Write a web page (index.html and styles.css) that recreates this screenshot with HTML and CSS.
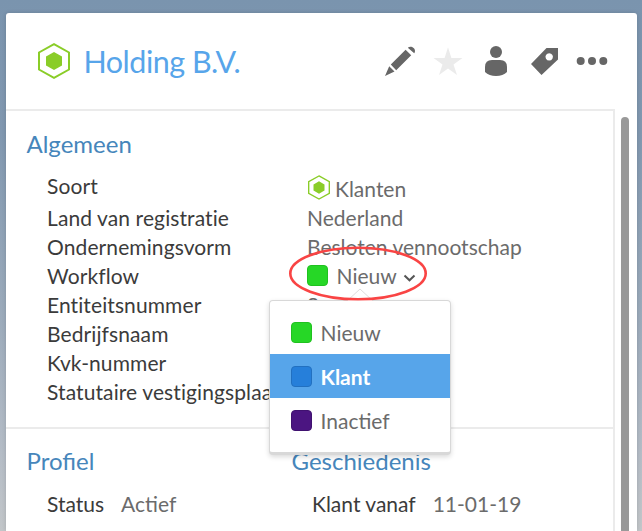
FILE: index.html
```html
<!DOCTYPE html>
<html lang="nl">
<head>
<meta charset="utf-8">
<title>Holding B.V.</title>
<link rel="stylesheet" href="styles.css">
</head>
<body>
<main class="panel">
  <header class="header">
    <svg class="logo" viewBox="0 0 32 36"><path class="hex-line" d="M16 1.2 31 9.5V26.5L16 34.8 1 26.5V9.5Z"/><path class="hex-fill" d="M16 9 24 13.5V22.5L16 27 8 22.5V13.5Z"/></svg>
    <h1 class="title">Holding B.V.</h1>
    <nav class="tools">
      <svg class="tool" viewBox="0 0 32 32"><path d="M1 31 5.2 21.3 10.5 26.4ZM6.8 19.6 21.6 4.8 27.2 10.2 12.2 25.2ZM23.8 2.8C27 -.4 33.2 4 30.2 8.2Z"/></svg>
      <svg class="tool star" viewBox="0 0 32 32"><path d="M16 2.3 19.4 12.9H30.5L21.5 19.4 25 30 16 23.6 7 30 10.5 19.4 1.5 12.9H12.6Z"/></svg>
      <svg class="tool" viewBox="0 0 32 32"><circle cx="16" cy="7" r="6"/><path d="M12 15H20Q27 15 27 22V27Q23 31 16 31 9 31 5 27V22Q5 15 12 15Z"/></svg>
      <svg class="tool" viewBox="0 0 32 32"><path fill-rule="evenodd" d="M18.5 3H30V14.5L13.5 30 3 19ZM21.2 8.2a3.7 3.7 0 1 0 .01 0Z"/></svg>
      <svg class="tool" viewBox="0 0 32 32"><circle cx="4.7" cy="16" r="4"/><circle cx="16" cy="16" r="4"/><circle cx="27.3" cy="16" r="4"/></svg>
    </nav>
  </header>
  <div class="body">
    <div class="content">
      <section class="general">
        <h2 class="heading">Algemeen</h2>
        <dl class="fields">
          <dt>Soort</dt>
          <dd class="kind"><svg class="kind-icon" viewBox="0 0 32 36"><path class="hex-line" d="M16 1.2 31 9.5V26.5L16 34.8 1 26.5V9.5Z"/><path class="hex-fill" d="M16 9 24 13.5V22.5L16 27 8 22.5V13.5Z"/></svg>Klanten</dd>
          <dt>Land van registratie</dt><dd>Nederland</dd>
          <dt>Ondernemingsvorm</dt><dd>Besloten vennootschap</dd>
          <dt>Workflow</dt>
          <dd class="workflow"><span class="swatch green"></span>Nieuw<svg class="chevron" viewBox="0 0 12 8"><path d="M1 1.5 6 6.3 11 1.5"/></svg></dd>
          <dt>Entiteitsnummer</dt><dd>8</dd>
          <dt>Bedrijfsnaam</dt><dd></dd>
          <dt>Kvk-nummer</dt><dd></dd>
          <dt>Statutaire vestigingsplaats</dt><dd></dd>
        </dl>
      </section>
      <div class="columns">
        <section>
          <h2 class="heading">Profiel</h2>
          <p class="pair"><span class="label">Status</span><span>Actief</span></p>
        </section>
        <section>
          <h2 class="heading">Geschiedenis</h2>
          <p class="pair"><span class="label">Klant vanaf</span><span>11-01-19</span></p>
        </section>
      </div>
    </div>
    <div class="scrollbar"></div>
  </div>
</main>
<div class="menu">
  <svg class="arrow" viewBox="0 0 28 13"><path d="M1 13 14 1 27 13"/></svg>
  <div class="item"><span class="swatch green"></span>Nieuw</div>
  <div class="item selected"><span class="swatch blue"></span>Klant</div>
  <div class="item"><span class="swatch purple"></span>Inactief</div>
</div>
<svg class="marker" viewBox="0 0 140 56"><ellipse cx="70" cy="27.5" rx="67.7" ry="25.7"/></svg>
</body>
</html>
```
FILE: styles.css
```css
* { box-sizing: border-box; }
body {
  margin: 0;
  height: 531px;
  padding: 13px 5px 0 6px;
  overflow: hidden;
  position: relative;
  background: linear-gradient(#7a94ae, #8198b0 25%, #9cabbb 60%, #b4bcc6 85%, #c2c6c9);
  font-family: Lato, sans-serif;
  font-size: 21px;
  line-height: 29px;
  color: #6b6b6b;
}
h1, h2, dl, dd, p { margin: 0; font-weight: 400; }
.panel {
  height: 518px;
  background: #fff;
  border-radius: 3px 3px 0 0;
  box-shadow: 0 0 4px rgba(0, 0, 0, .15);
  overflow: hidden;
}
.header { height: 96px; display: flex; align-items: center; padding: 0 29px 0 32px; }
.logo { width: 32px; height: 36px; }
.hex-line { fill: none; stroke: #8acd28; stroke-width: 2; }
.hex-fill { fill: #8acd28; }
.title { margin-left: 13.5px; font-size: 30.5px; line-height: 40px; letter-spacing: -.5px; color: #57a5ea; }
.tools { margin-left: auto; display: flex; gap: 16px; }
.tool { width: 32px; height: 32px; fill: #666; }
.star { fill: #ebebeb; }
.body { display: flex; height: 422px; }
.content {
  width: 609px;
  border-top: 2px solid #ebebeb;
  border-right: 2px solid #ebebeb;
}
.scrollbar { width: 8px; margin: 8px 0 0 6px; background: #999; border-radius: 4px 4px 0 0; }
.general { height: 318px; padding: 18px 0 0 20.5px; border-bottom: 2px solid #ebebeb; }
.heading { font-size: 24px; line-height: 30px; color: #4686bb; }
.fields { margin: 12px 0 0 20.5px; display: grid; grid-template-columns: 260px 1fr; grid-auto-rows: 29px; grid-template-rows: 32px; white-space: nowrap; }
dt, .label { color: #3b3b3b; }
dt { letter-spacing: .1px; }
.kind { display: flex; padding-top: 3px; }
.kind-icon { width: 22px; height: 25px; margin: 1px 5px 0 1px; }
.workflow { display: flex; }
.swatch { width: 21px; height: 21px; border: 1.5px solid; border-radius: 4px; flex: none; }
.workflow .swatch { margin: 4px 8.5px 0 0; }
.green { background: #26d726; border-color: #20c120; }
.blue { background: #267fda; border-color: #2270c0; }
.purple { background: #4b1581; border-color: #401270; }
.chevron { width: 13px; height: 8px; margin: 13px 0 0 6px; fill: none; stroke: #555; stroke-width: 2; }
.columns { display: grid; grid-template-columns: 265px 1fr; padding: 17px 0 0 20.5px; }
.pair { margin: 13px 0 0 20.5px; display: flex; gap: 17px; }
.menu {
  position: absolute;
  left: 269px;
  top: 300px;
  width: 182px;
  height: 155px;
  padding-top: 9px;
  background: #fff;
  border: 1px solid #d8d8d8;
  border-bottom-width: 3px;
  border-radius: 4px;
  box-shadow: 0 2px 5px rgba(0, 0, 0, .15);
}
.arrow { position: absolute; left: 76px; top: -13px; width: 28px; height: 13px; fill: #fff; stroke: #ddd; }
.item { height: 44px; display: flex; align-items: center; gap: 8.5px; padding-left: 21px; }
.selected { background: #57a5ea; color: #fff; font-weight: 700; }
.marker { position: absolute; left: 288px; top: 246px; width: 140px; height: 56px; fill: none; stroke: #f94444; stroke-width: 2.6; }
```
